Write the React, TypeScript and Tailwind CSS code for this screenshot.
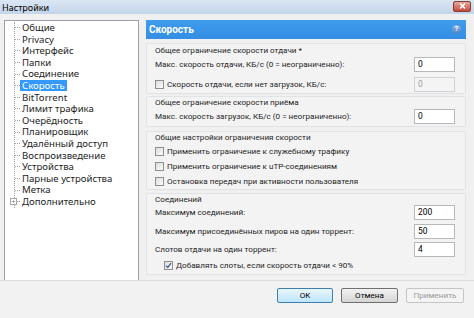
import { useState } from 'react';

const TREE_ITEMS = [
  'Общие', 'Privacy', 'Интерфейс', 'Папки', 'Соединение', 'Скорость', 'BitTorrent',
  'Лимит трафика', 'Очерёдность', 'Планировщик', 'Удалённый доступ', 'Воспроизведение',
  'Устройства', 'Парные устройства', 'Метка', 'Дополнительно',
];

function CheckBox({ checked = false }: { checked?: boolean }) {
  return (
    <span className="w-[9px] h-[9px] shrink-0 border border-[#8e8f8f] bg-gradient-to-br from-[#dcdcdc] to-[#fbfbfb] flex items-center justify-center">
      {checked && (
        <svg width="7" height="7" viewBox="0 0 7 7">
          <path d="M1 3.6 L2.8 5.4 L6 1.2" fill="none" stroke="#4a5f97" strokeWidth="1.3" />
        </svg>
      )}
    </span>
  );
}

function NumInput({ value, disabled = false }: { value: string; disabled?: boolean }) {
  return (
    <div
      className={`w-[41px] h-[15px] border px-[3px] flex items-center text-[8.4px] ${
        disabled ? 'border-[#cfd2d6] bg-[#f4f4f4] text-[#9c9c9c]' : 'border-[#b5b9be] bg-white text-black'
      }`}
    >
      {value}
    </div>
  );
}

function Group({ title, className, children }: { title: string; className: string; children?: React.ReactNode }) {
  return (
    <div className={`border border-[#e0e3e6] bg-[#f3f3f3] rounded-[2px] pl-[8px] pr-[10px] flex flex-col ${className}`}>
      <div className="h-[11px] flex items-center">{title}</div>
      {children}
    </div>
  );
}

export default function App() {
  const [selected, setSelected] = useState('Скорость');

  return (
    <div
      className="w-[474px] h-[318px] bg-[#f0f0f0] flex flex-col overflow-hidden text-[9px] text-[#1e1e1e] leading-none"
      style={{ fontFamily: '"Noto Sans", "Open Sans", sans-serif' }}
    >
      {/* title bar */}
      <div className="h-[14px] shrink-0 bg-gradient-to-b from-[#dbe6f3] to-[#c3d5ea] flex items-center justify-between pl-[2px] pr-[3px]">
        <span className="text-[9px] text-black">Настройки</span>
        <div className="w-[18px] h-[11px] -mt-[2px] rounded-[2px] bg-gradient-to-b from-[#e3a79c] to-[#c4493a] border border-[#8b3a30] flex items-center justify-center">
          <svg width="7" height="6" viewBox="0 0 7 6">
            <path d="M1 0.5 L6 5.5 M6 0.5 L1 5.5" stroke="white" strokeWidth="1.5" />
          </svg>
        </div>
      </div>

      {/* body */}
      <div className="flex pt-[6px] pl-[4px] h-[266px] shrink-0">
        {/* tree */}
        <div className="w-[135px] h-[261px] bg-white border border-[#9aa0a8] pt-[1px] pl-[9px] text-[9.6px]">
          <div className="border-l border-dotted border-[#a0a0a0] w-fit ml-0">
            {TREE_ITEMS.map((item, i) => (
              <div key={item} className="h-[11.6px] flex items-center relative">
                <span className="w-[5px] border-t border-dotted border-[#a0a0a0]" />
                {i === TREE_ITEMS.length - 1 && (
                  <span className="absolute -left-[5px] w-[7px] h-[7px] border border-[#a6a6a6] bg-white flex items-center justify-center text-[6px] text-[#555]">
                    +
                  </span>
                )}
                <span
                  onClick={() => setSelected(item)}
                  className={`px-[2px] h-[11px] flex items-center whitespace-nowrap cursor-default ${
                    selected === item ? 'bg-[#3399ff] text-white' : ''
                  }`}
                >
                  {item}
                </span>
              </div>
            ))}
          </div>
        </div>

        {/* right panel */}
        <div
          className="ml-[7px] w-[320px] flex flex-col text-[8.1px]"
          style={{ fontFamily: 'Roboto, "Noto Sans", sans-serif' }}
        >
          <div className="h-[19px] bg-gradient-to-b from-[#3f9bec] to-[#338ee4] flex items-center justify-between pl-[3px] pr-[5px]">
            <span className="text-white font-bold text-[10px]">Скорость</span>
            <span className="w-[9px] h-[9px] rounded-full bg-gradient-to-b from-[#8eb8e6] to-[#4a7fc0] text-white text-[7px] font-bold flex items-center justify-center">
              ?
            </span>
          </div>

          <Group title="Общее ограничение скорости отдачи *" className="mt-[4px] h-[51px] pt-[1px]">
            <div className="h-[15px] mt-[1px] flex items-center justify-between">
              <span>Макс. скорость отдачи, КБ/с (0 = неограниченно):</span>
              <NumInput value="0" />
            </div>
            <div className="h-[15px] mt-[5px] flex items-center justify-between">
              <span className="flex items-center gap-[3px]">
                <CheckBox />
                Скорость отдачи, если нет загрузок, КБ/с:
              </span>
              <NumInput value="0" disabled />
            </div>
          </Group>

          <Group title="Общее ограничение скорости приёма" className="mt-[2px] h-[31px] pt-[0px]">
            <div className="h-[15px] mt-[1px] flex items-center justify-between">
              <span>Макс. скорость загрузок, КБ/с (0 = неограниченно):</span>
              <NumInput value="0" />
            </div>
          </Group>

          <Group title="Общие настройки ограничения скорости" className="mt-[4px] h-[59px] pt-[0px]">
            <div className="h-[16px] mt-[1px] flex items-center gap-[3px]">
              <CheckBox />
              Применить ограничение к служебному трафику
            </div>
            <div className="h-[16px] flex items-center gap-[3px]">
              <CheckBox />
              Применить ограничение к uTP-соединениям
            </div>
            <div className="h-[16px] flex items-center gap-[3px]">
              <CheckBox />
              Остановка передач при активности пользователя
            </div>
          </Group>

          <Group title="Соединений" className="mt-[3px] h-[82px] pt-[0px]">
            <div className="h-[15px] mt-[0px] flex items-center justify-between">
              <span>Максимум соединений:</span>
              <NumInput value="200" />
            </div>
            <div className="h-[15px] mt-[4px] flex items-center justify-between">
              <span>Максимум присоединённых пиров на один торрент:</span>
              <NumInput value="50" />
            </div>
            <div className="h-[15px] mt-[3px] flex items-center justify-between">
              <span>Слотов отдачи на один торрент:</span>
              <NumInput value="4" />
            </div>
            <div className="h-[14px] mt-[1px] pl-[9px] flex items-center gap-[3px]">
              <CheckBox checked />
              Добавлять слоты, если скорость отдачи &lt; 90%
            </div>
          </Group>
        </div>
      </div>

      {/* footer */}
      <div
        className="flex-1 border-t border-[#dcdcdc] bg-[#f2f2f2] flex justify-end items-start pt-[7px] pr-[10px] gap-[8px] text-[8.1px]"
        style={{ fontFamily: 'Roboto, "Noto Sans", sans-serif' }}
      >
        <button className="w-[56px] h-[15px] rounded-[2px] border border-[#3c7fb1] bg-gradient-to-b from-[#eaf6fd] to-[#bee6fd] text-black">
          OK
        </button>
        <button className="w-[57px] h-[15px] rounded-[2px] border border-[#707070] bg-gradient-to-b from-[#f2f2f2] to-[#d5d5d5] text-black">
          Отмена
        </button>
        <button className="w-[58px] h-[15px] rounded-[2px] border border-[#c5c5c5] bg-[#f4f4f4] text-[#9a9a9a]">
          Применить
        </button>
      </div>
    </div>
  );
}
